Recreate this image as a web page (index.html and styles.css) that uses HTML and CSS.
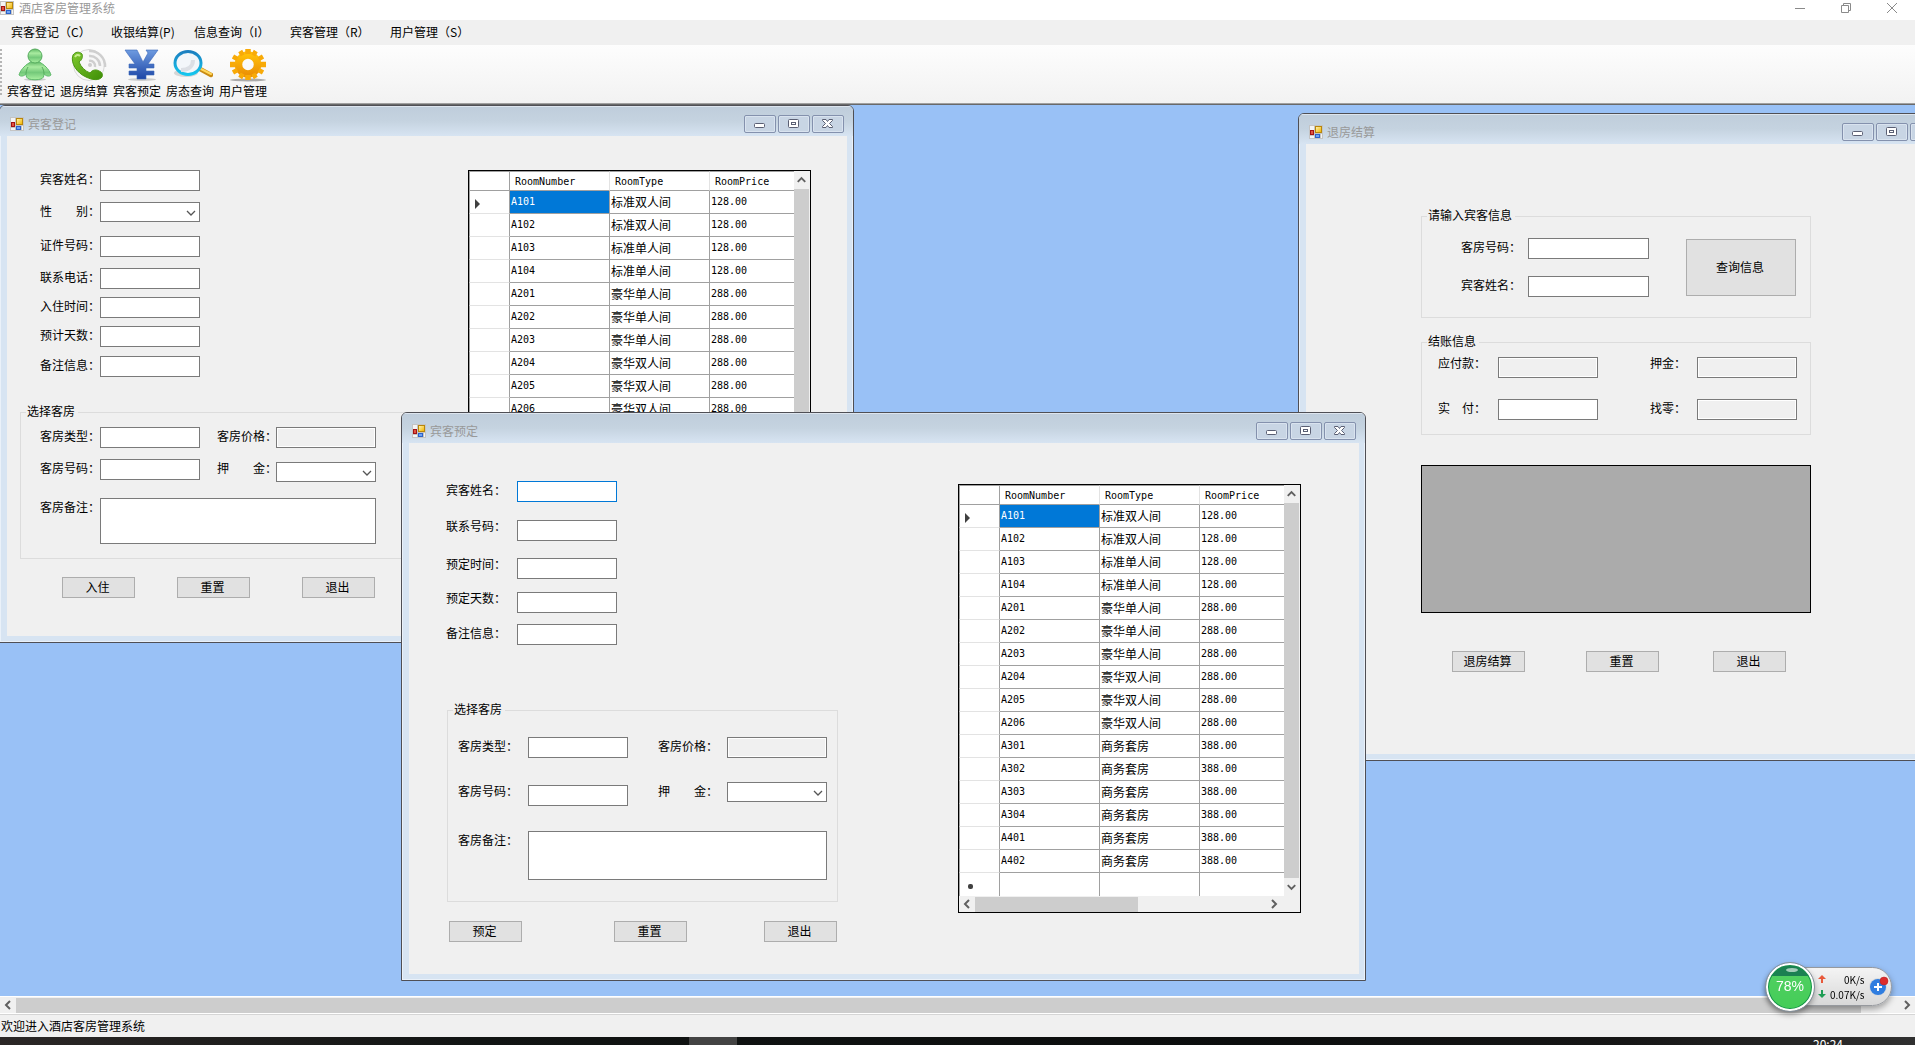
FILE: index.html
```html
<!DOCTYPE html>
<html lang="zh-CN">
<head>
<meta charset="utf-8">
<title>酒店客房管理系统</title>
<link rel="stylesheet" href="styles.css">
</head>
<body>
<svg class="defs" width="0" height="0" aria-hidden="true">
  <defs>
    <linearGradient id="gold" x1="0" y1="0" x2="1" y2="1"><stop offset="0" stop-color="#fff0a8"/><stop offset="1" stop-color="#f2b705"/></linearGradient>
    <linearGradient id="green" x1="0" y1="0" x2="0" y2="1"><stop offset="0" stop-color="#5fb865"/><stop offset=".3" stop-color="#a9eba0"/><stop offset=".6" stop-color="#74c97a"/><stop offset="1" stop-color="#a9f0a0"/></linearGradient>
    <linearGradient id="phone" x1="0" y1="0" x2="1" y2="1"><stop offset="0" stop-color="#7fc92f"/><stop offset="1" stop-color="#3f8f06"/></linearGradient>
    <linearGradient id="yen" x1="0" y1="0" x2="0" y2="1"><stop offset="0" stop-color="#6e9be0"/><stop offset="1" stop-color="#1d46a6"/></linearGradient>
    <linearGradient id="ring" x1="0" y1="0" x2="0" y2="1"><stop offset="0" stop-color="#1c7fc0"/><stop offset="1" stop-color="#14c6ee"/></linearGradient>
    <linearGradient id="gear" x1="0" y1="0" x2="0" y2="1"><stop offset="0" stop-color="#ffbf08"/><stop offset="1" stop-color="#ec9206"/></linearGradient>
    <symbol id="app-icon" viewBox="0 0 14 14">
      <path d="M0 0h14v14H0z" fill="#c4c4c4"/><path d="M1 1h4v4H1zM1 11h4v2H1zM12 9h1v4h-1z" fill="#f4f4f4"/>
      <path d="M1 5h4v5H1z" fill="#a31212"/><path d="M2 6h2v3H2z" fill="#e0533f"/>
      <path d="M6 1h7v7H6z" fill="#b8860b"/><path d="M7 2h5v5H7z" fill="url(#gold)"/>
      <path d="M6 9h5v4H6z" fill="#2c62c9"/><path d="M7 10h3v2H7z" fill="#6fa3f5"/>
    </symbol>
    <symbol id="cap-min" viewBox="0 0 32 18"><rect x="10.500" y="8.500" width="10" height="4" rx="1" fill="#fff" stroke="#5a5f73"/></symbol>
    <symbol id="cap-max" viewBox="0 0 32 18"><rect x="10.500" y="4.500" width="10" height="8" rx="1" fill="#fff" stroke="#5a5f73"/><rect x="13.500" y="7.500" width="4" height="2" fill="#fff" stroke="#5a5f73"/></symbol>
    <symbol id="cap-close" viewBox="0 0 32 18"><path d="M10.500 4.500h3.500l1.500 2 1.500-2h3.500v1l-3 3 3 3v1h-3.500l-1.500-2-1.500 2h-3.500v-1l3-3-3-3z" fill="#fff" stroke="#5a5f73"/></symbol>
    <symbol id="arrow-up" viewBox="0 0 16 16"><path d="M4 10l4-4 4 4" fill="none" stroke="#606060" stroke-width="2"/></symbol>
    <symbol id="arrow-down" viewBox="0 0 16 16"><path d="M4 6l4 4 4-4" fill="none" stroke="#606060" stroke-width="2"/></symbol>
    <symbol id="arrow-left" viewBox="0 0 16 16"><path d="M10 4l-4 4 4 4" fill="none" stroke="#606060" stroke-width="2"/></symbol>
    <symbol id="arrow-right" viewBox="0 0 16 16"><path d="M6 4l4 4-4 4" fill="none" stroke="#606060" stroke-width="2"/></symbol>
    <symbol id="chevron" viewBox="0 0 10 6"><path d="M1 1l4 4 4-4" fill="none" stroke="#555" stroke-width="1.300"/></symbol>
  </defs>
</svg>

<header class="titlebar">
  <svg class="app-icon"><use href="#app-icon"/></svg>
  <h1>酒店客房管理系统</h1>
  <div class="sys-buttons">
    <button type="button" aria-label="最小化"><svg viewBox="0 0 12 12"><path d="M1 6.500h10"/></svg></button>
    <button type="button" aria-label="还原"><svg viewBox="0 0 12 12"><path d="M1.500 3.500h7v7h-7zM3.500 3.500v-2h7v7h-2"/></svg></button>
    <button type="button" aria-label="关闭"><svg viewBox="0 0 12 12"><path d="M1 1l10 10M11 1L1 11"/></svg></button>
  </div>
</header>

<nav class="menubar">
  <a href="#checkin">宾客登记（C）</a>
  <a href="#checkout">收银结算(P)</a>
  <a href="#query">信息查询（I）</a>
  <a href="#guests">宾客管理（R）</a>
  <a href="#users">用户管理（S）</a>
</nav>

<div class="toolbar">
  <button type="button">
    <svg viewBox="0 0 40 34"><ellipse cx="21" cy="31.500" rx="11" ry="1.500" fill="#ccc"/><path d="M15 15c3-2 10-2 12 0 5 3 9 8 10 12-2 2-5 1-7-1 0 3-1 4-3 5-3 1-9 1-12 0-2-1-3-2-3-5-2 2-5 3-7 1 1-4 5-9 10-12z" fill="url(#green)" stroke="#5cb868"/><circle cx="21" cy="8" r="7" fill="url(#green)" stroke="#55ab5d"/><path d="M12 26c0-3 1-5 2-7M30 26c0-3-1-5-2-7" fill="none" stroke="#55ab5d"/></svg>
    宾客登记</button>
  <button type="button">
    <svg viewBox="0 0 40 34"><circle cx="22" cy="17" r="15.500" fill="#f7f7f7" stroke="#d9d9d9"/><path d="M22 8a10 10 0 0 1 11 10M22 3a15 15 0 0 1 16 16M22 13a5 5 0 0 1 6 6" fill="none" stroke="#cfcfcf" stroke-width="2.500"/><circle cx="23" cy="17" r="2" fill="#ccc"/><path d="M6 7c2-3 6-4 9-1 1 3 0 6-3 8 2 5 6 9 11 11 2-3 6-4 9-2 3 1 4 3 3 6-3 4-10 3-16 0C10 25 3 15 6 7z" fill="url(#phone)" stroke="#4b9613"/><path d="M8 9c1-2 3-3 5-1" fill="none" stroke="#c8ee90" stroke-width="2"/></svg>
    退房结算</button>
  <button type="button">
    <svg viewBox="0 0 40 34"><ellipse cx="22" cy="31.500" rx="14" ry="1.500" fill="#ccc"/><path d="M5 2h12l6 12 5-9-2-3h12l-10 14h6v4h-8v3h8v4h-8v4H17v-4H9v-4h8v-3H9v-4h6L7 5z" fill="url(#yen)" stroke="#3a68bb" stroke-width=".6"/></svg>
    宾客预定</button>
  <button type="button">
    <svg viewBox="0 0 40 34"><ellipse cx="13" cy="25" rx="12" ry="4" fill="#d6d6d6"/><path d="M27 21l11 6" stroke="#c98a12" stroke-width="4.500" stroke-linecap="round"/><path d="M28 21l10 5" stroke="#ffd65a" stroke-width="2" stroke-linecap="round"/><ellipse cx="15" cy="15" rx="13" ry="11.500" fill="#f3f6fa" stroke="url(#ring)" stroke-width="3"/><path d="M20 12c0 6-4 10-12 10" fill="none" stroke="#dcdfe5" stroke-width="4"/></svg>
    房态查询</button>
  <button type="button">
    <svg viewBox="0 0 40 34"><ellipse cx="22" cy="32" rx="18" ry="1.500" fill="#aaa"/><circle cx="22" cy="16.500" r="9.500" fill="none" stroke="url(#gear)" stroke-width="7.500"/><g stroke="#f8aa08" stroke-width="5.500"><path d="M22 1v5M22 27v5M4 16.500h5M35 16.500h5"/><path d="M14.200 3l2.500 4.300M27.300 25.700l2.500 4.300M29.800 3l-2.500 4.300M16.700 25.700L14.200 30M7 8.500l4.300 2.500M32.700 22l4.300 2.500M37 8.500L32.700 11M11.300 22L7 24.500" stroke-width="4.500"/></g></svg>
    用户管理</button>
</div>

<main class="desktop">

  <section class="window win-checkin" id="checkin">
    <header class="caption">
      <svg class="app-icon"><use href="#app-icon"/></svg><h2>宾客登记</h2>
      <button type="button" aria-label="最小化"><svg><use href="#cap-min"/></svg></button>
      <button type="button" aria-label="最大化"><svg><use href="#cap-max"/></svg></button>
      <button type="button" aria-label="关闭"><svg><use href="#cap-close"/></svg></button>
    </header>
    <div class="client">
      <form>
        <div class="fields">
          <label for="c-name">宾客姓名：</label><input id="c-name" type="text">
          <label for="c-sex">性　　别：</label><span class="combo"><select id="c-sex"><option></option><option>男</option><option>女</option></select><svg><use href="#chevron"/></svg></span>
          <label for="c-id">证件号码：</label><input id="c-id" type="text">
          <label for="c-tel">联系电话：</label><input id="c-tel" type="text">
          <label for="c-date">入住时间：</label><input id="c-date" type="text">
          <label for="c-days">预计天数：</label><input id="c-days" type="text">
          <label for="c-note">备注信息：</label><input id="c-note" type="text">
        </div>
        <fieldset>
          <legend>选择客房</legend>
          <div class="group">
            <label for="c-type">客房类型：</label><input id="c-type" type="text">
            <label for="c-price">客房价格：</label><input id="c-price" type="text" readonly>
            <label for="c-room">客房号码：</label><input id="c-room" type="text">
            <label for="c-deposit">押　　金：</label><span class="combo lower"><select id="c-deposit"><option></option></select><svg><use href="#chevron"/></svg></span>
            <label for="c-remark">客房备注：</label><textarea id="c-remark"></textarea>
          </div>
        </fieldset>
        <div class="actions"><button type="button">入住</button><button type="button">重置</button><button type="button">退出</button></div>
      </form>
      <div class="datagrid">
        <table>
          <thead><tr><th></th><th scope="col">RoomNumber</th><th scope="col">RoomType</th><th scope="col">RoomPrice</th></tr></thead>
          <tbody>
            <tr><th scope="row"><i class="current"></i></th><td class="selected">A101</td><td class="zh">标准双人间</td><td>128.00</td></tr>
            <tr><th></th><td>A102</td><td class="zh">标准双人间</td><td>128.00</td></tr>
            <tr><th></th><td>A103</td><td class="zh">标准单人间</td><td>128.00</td></tr>
            <tr><th></th><td>A104</td><td class="zh">标准单人间</td><td>128.00</td></tr>
            <tr><th></th><td>A201</td><td class="zh">豪华单人间</td><td>288.00</td></tr>
            <tr><th></th><td>A202</td><td class="zh">豪华单人间</td><td>288.00</td></tr>
            <tr><th></th><td>A203</td><td class="zh">豪华单人间</td><td>288.00</td></tr>
            <tr><th></th><td>A204</td><td class="zh">豪华双人间</td><td>288.00</td></tr>
            <tr><th></th><td>A205</td><td class="zh">豪华双人间</td><td>288.00</td></tr>
            <tr><th></th><td>A206</td><td class="zh">豪华双人间</td><td>288.00</td></tr>
          </tbody>
        </table>
        <div class="vscroll"><svg><use href="#arrow-up"/></svg><div class="thumb"></div><svg><use href="#arrow-down"/></svg></div>
      </div>
    </div>
  </section>

  <section class="window win-checkout" id="checkout">
    <header class="caption">
      <svg class="app-icon"><use href="#app-icon"/></svg><h2>退房结算</h2>
      <button type="button" aria-label="最小化"><svg><use href="#cap-min"/></svg></button>
      <button type="button" aria-label="最大化"><svg><use href="#cap-max"/></svg></button>
      <button type="button" aria-label="关闭"><svg><use href="#cap-close"/></svg></button>
    </header>
    <div class="client">
      <form>
        <fieldset>
          <legend>请输入宾客信息</legend>
          <div class="group lookup">
            <label for="o-room">客房号码：</label><input id="o-room" type="text">
            <button type="button">查询信息</button>
            <label for="o-name">宾客姓名：</label><input id="o-name" type="text">
          </div>
        </fieldset>
        <fieldset>
          <legend>结账信息</legend>
          <div class="group bill">
            <label class="raised" for="o-due">应付款：</label><input id="o-due" type="text" readonly>
            <label class="raised" for="o-deposit">押金：</label><input id="o-deposit" type="text" readonly>
            <label for="o-paid">实　付：</label><input id="o-paid" type="text">
            <label for="o-change">找零：</label><input id="o-change" type="text" readonly>
          </div>
        </fieldset>
        <div class="empty-grid"></div>
        <div class="actions"><button type="button">退房结算</button><button type="button">重置</button><button type="button">退出</button></div>
      </form>
    </div>
  </section>

  <section class="window win-booking" id="booking">
    <header class="caption">
      <svg class="app-icon"><use href="#app-icon"/></svg><h2>宾客预定</h2>
      <button type="button" aria-label="最小化"><svg><use href="#cap-min"/></svg></button>
      <button type="button" aria-label="最大化"><svg><use href="#cap-max"/></svg></button>
      <button type="button" aria-label="关闭"><svg><use href="#cap-close"/></svg></button>
    </header>
    <div class="client">
      <form>
        <div class="fields">
          <label for="b-name">宾客姓名：</label><input id="b-name" class="active" type="text">
          <label class="raised" for="b-tel">联系号码：</label><input id="b-tel" type="text">
          <label class="raised" for="b-date">预定时间：</label><input id="b-date" type="text">
          <label class="raised" for="b-days">预定天数：</label><input id="b-days" type="text">
          <label for="b-note">备注信息：</label><input id="b-note" type="text">
        </div>
        <fieldset>
          <legend>选择客房</legend>
          <div class="group">
            <label for="b-type">客房类型：</label><input id="b-type" type="text">
            <label for="b-price">客房价格：</label><input id="b-price" type="text" readonly>
            <label for="b-room">客房号码：</label><input id="b-room" class="lower" type="text">
            <label for="b-deposit">押　　金：</label><span class="combo"><select id="b-deposit"><option></option></select><svg><use href="#chevron"/></svg></span>
            <label for="b-remark">客房备注：</label><textarea id="b-remark"></textarea>
          </div>
        </fieldset>
        <div class="actions"><button type="button">预定</button><button type="button">重置</button><button type="button">退出</button></div>
      </form>
      <div class="datagrid">
        <table>
          <thead><tr><th></th><th scope="col">RoomNumber</th><th scope="col">RoomType</th><th scope="col">RoomPrice</th></tr></thead>
          <tbody>
            <tr><th scope="row"><i class="current"></i></th><td class="selected">A101</td><td class="zh">标准双人间</td><td>128.00</td></tr>
            <tr><th></th><td>A102</td><td class="zh">标准双人间</td><td>128.00</td></tr>
            <tr><th></th><td>A103</td><td class="zh">标准单人间</td><td>128.00</td></tr>
            <tr><th></th><td>A104</td><td class="zh">标准单人间</td><td>128.00</td></tr>
            <tr><th></th><td>A201</td><td class="zh">豪华单人间</td><td>288.00</td></tr>
            <tr><th></th><td>A202</td><td class="zh">豪华单人间</td><td>288.00</td></tr>
            <tr><th></th><td>A203</td><td class="zh">豪华单人间</td><td>288.00</td></tr>
            <tr><th></th><td>A204</td><td class="zh">豪华双人间</td><td>288.00</td></tr>
            <tr><th></th><td>A205</td><td class="zh">豪华双人间</td><td>288.00</td></tr>
            <tr><th></th><td>A206</td><td class="zh">豪华双人间</td><td>288.00</td></tr>
            <tr><th></th><td>A301</td><td class="zh">商务套房</td><td>388.00</td></tr>
            <tr><th></th><td>A302</td><td class="zh">商务套房</td><td>388.00</td></tr>
            <tr><th></th><td>A303</td><td class="zh">商务套房</td><td>388.00</td></tr>
            <tr><th></th><td>A304</td><td class="zh">商务套房</td><td>388.00</td></tr>
            <tr><th></th><td>A401</td><td class="zh">商务套房</td><td>388.00</td></tr>
            <tr><th></th><td>A402</td><td class="zh">商务套房</td><td>388.00</td></tr>
            <tr class="new-row"><th><i class="new"></i></th><td></td><td></td><td></td></tr>
          </tbody>
        </table>
        <div class="vscroll"><svg><use href="#arrow-up"/></svg><div class="thumb"></div><svg><use href="#arrow-down"/></svg></div>
        <div class="hscroll"><svg><use href="#arrow-left"/></svg><div class="track"><div class="thumb"></div></div><svg><use href="#arrow-right"/></svg></div>
      </div>
    </div>
  </section>
</main>

<div class="hscroll desktop-scroll"><svg><use href="#arrow-left"/></svg><div class="track"><div class="thumb"></div></div><svg><use href="#arrow-right"/></svg></div>
<footer class="statusbar">欢迎进入酒店客房管理系统</footer>
<div class="taskbar"><div class="task"></div><time>20:24</time></div>

<aside class="netmon">
  <div class="ball">78%</div>
  <dl>
    <dt><svg viewBox="0 0 8 8"><path d="M4 0l4 4H5v4H3V4H0z" fill="#e8593b"/></svg></dt><dd>0K/s</dd>
    <dt><svg viewBox="0 0 8 8"><path d="M4 8l4-4H5V0H3v4H0z" fill="#1f9d55"/></svg></dt><dd>0.07K/s</dd>
  </dl>
  <svg class="boost" viewBox="0 0 20 20"><circle cx="9" cy="11" r="9" fill="#d8dadd"/><circle cx="9" cy="11" r="8" fill="#2f7de0"/><path d="M9 7v8M5 11h8" stroke="#fff" stroke-width="2"/><circle cx="15" cy="5" r="4" fill="#dc2c2c" stroke="#b81f1f" stroke-width=".5"/></svg>
</aside>
</body>
</html>
```
FILE: styles.css
```css
* { box-sizing: border-box; }

body {
  margin: 0;
  height: 100vh;
  display: flex;
  flex-direction: column;
  overflow: hidden;
  background: #f0f0f0;
  color: #000;
  font: 12px/18px "Noto Sans CJK SC", sans-serif;
}

button, input, select, textarea { font: inherit; color: inherit; margin: 0; padding: 0; border-radius: 0; }
h1, h2 { margin: 0; font-size: 12px; font-weight: 400; color: #999; }
svg { display: block; flex: none; }
.defs { position: absolute; }
.app-icon { width: 14px; height: 14px; }

/* Main window chrome */
.titlebar { flex: none; height: 20px; display: flex; align-items: center; gap: 5px; background: #fff; padding-bottom: 4px; }
.sys-buttons { margin-left: auto; display: flex; }
.sys-buttons button { width: 46px; height: 16px; border: 0; background: none; display: grid; place-items: center; }
.sys-buttons svg { width: 12px; height: 12px; fill: none; stroke: #8a8a8a; }

.menubar { flex: none; height: 25px; display: grid; grid-template-columns: 100px 83px 96px 100px 100px; align-items: center; padding: 0 0 2px 11px; }
.menubar a { color: #000; text-decoration: none; white-space: nowrap; }

.toolbar { flex: none; height: 58px; display: flex; gap: 5px; padding: 3px 7px; position: relative; background: linear-gradient(#fdfdfd, #f2f2f2); }
.toolbar::before { content: ""; position: absolute; left: 0; top: 4px; bottom: 8px; width: 2px; background: repeating-linear-gradient(#b5b5b5 0 2px, transparent 2px 4px); }
.toolbar button { width: 48px; height: 51px; border: 0; background: none; line-height: 18px; white-space: nowrap; text-align: left; }
.toolbar svg { width: 40px; height: 34px; margin-left: 7px; }

.desktop { flex: 1; min-height: 0; position: relative; overflow: hidden; background: #99c1f6; border-top: 1px solid #a0a0a0; box-shadow: inset 0 1px #696969; padding-top: 1px; }

/* Child windows */
.window { position: absolute; border: 1px solid #4f4f55; border-radius: 6px 6px 0 0; background: #d7e4f2; padding: 0 6px 6px 7px; box-shadow: inset 0 0 0 1px #eaf1f9; overflow: hidden; }
.win-checkin { left: -1px; top: 1px; width: 855px; }
.win-booking { left: 401px; top: 308px; width: 965px; }
.win-checkout { left: 1298px; top: 9px; width: 654px; }

.caption { height: 30px; margin: 0 -6px 0 -7px; padding: 5px 9px 0 10px; display: flex; align-items: center; gap: 2px; background: linear-gradient(#bfcddb, #c5d3e0 50%, #d7e4f2); box-shadow: inset 0 1px #dde5ee; }
.caption h2 { flex: 1; padding-left: 2px; }
.caption button { width: 32px; height: 18px; border: 1px solid #8491ad; border-radius: 2px; background: #c8d5e4; box-shadow: inset 0 0 0 1px #d9e3ef; }
.caption button svg { width: 32px; height: 18px; margin: -1px; }

.client { background: #f0f0f0; display: flex; justify-content: space-between; align-items: flex-start; }
.win-checkin .client { padding: 34px 36px 37px 13px; }
.win-booking .client { padding: 38px 58px 32px 38px; }
.win-checkout .client { padding: 64px 0 82px 115px; }
.win-checkin form { width: 410px; }
.win-booking form { width: 391px; }
.win-checkout form { width: 390px; }

/* Form controls */
label { line-height: 18px; margin-left: -1px; white-space: nowrap; }
label.raised { line-height: 12px; }
input, select, textarea { display: block; width: 100px; height: 21px; border: 1px solid #7a7a7a; background: #fff; outline: 0; resize: none; }
input[readonly] { background: #f0f0f0; box-shadow: inset 0 0 0 1px #fff; }
input.active { border-color: #0078d7; }
select { height: 20px; appearance: none; }
.combo { position: relative; width: 100px; }
.combo svg { position: absolute; right: 4px; top: 8px; width: 10px; height: 6px; pointer-events: none; }
.lower { margin-top: 3px; }

.fields, .group, .actions { display: grid; align-items: start; justify-content: start; }
.win-checkin .fields { grid-template-columns: 59px 100px; grid-template-rows: 32px 34px 32px 29px 29px 30px 21px; padding-left: 21px; margin-bottom: 27px; }
.win-booking .fields { grid-template-columns: 70px 100px; grid-template-rows: 39px 38px 34px 32px 21px; margin-bottom: 57px; }

fieldset { margin: 0; padding: 0; min-width: 0; border: 1px solid #dcdcdc; }
legend { margin-left: 5px; padding: 0 3px 2px 1px; line-height: 14px; }
.group textarea { grid-column: 2 / -1; width: 100%; }
.win-checkin .group { grid-template-columns: 59px 118px 58px 100px; grid-template-rows: 32px 39px 46px; padding: 7px 0 14px 20px; }
.win-checkin textarea { height: 46px; }
.win-booking .group { grid-template-columns: 69px 131px 68px 100px; grid-template-rows: 45px 49px 49px; padding: 19px 0 21px 11px; }
.win-booking textarea { height: 49px; }
.group.lookup { grid-template-columns: 66px 158px 110px; grid-template-rows: 38px 21px; padding: 14px 0 20px 40px; }
.lookup input { width: 121px; }
.lookup button { grid-area: 1 / 3 / 3; height: 57px; align-self: center; }
.group.bill { grid-template-columns: 59px 153px 46px 100px; grid-template-rows: 42px 21px; padding: 7px 0 14px 17px; }
fieldset + fieldset { margin-top: 16px; }
.empty-grid { margin-top: 30px; height: 148px; border: 1px solid #000; background: #ababab; }

form button { border: 1px solid #adadad; background: #e1e1e1; padding: 0 2px 2px 0; }
.actions { margin-top: 18px; }
.actions button { width: 73px; height: 21px; line-height: 17px; }
.win-checkin .actions { grid-template-columns: 115px 125px 73px; padding-left: 42px; }
.win-booking .actions { grid-template-columns: 165px 150px 73px; padding-left: 2px; margin-top: 19px; }
.win-checkout .actions { grid-template-columns: 134px 127px 73px; padding-left: 31px; margin-top: 38px; }

/* Room list */
.datagrid { width: 343px; border: 1px solid #000; display: grid; grid-template-columns: 325px 16px; background: #f0f0f0; }
.win-checkin .datagrid { height: 429px; }
.win-booking .datagrid { margin-top: 3px; }
table { align-self: start; width: 325px; table-layout: fixed; border-collapse: separate; border-spacing: 0; background: #fff; font: 10px/16px "DejaVu Sans Mono", "Noto Sans CJK SC", monospace; }
th, td { height: 23px; padding: 0 0 0 1px; text-align: left; font-weight: 400; border: solid #a0a0a0; border-width: 0 1px 1px 0; white-space: nowrap; }
th:first-child { width: 41px; border-left: 1px solid #a0a0a0; }
th:nth-child(2), th:nth-child(3) { width: 100px; }
th:last-child, td:last-child { border-right: 0; }
thead th { height: 20px; padding: 2px 0 0 5px; border-top: 1px solid #a0a0a0; border-right-color: #e3e3e3; }
thead th:first-child { border-right-color: #a0a0a0; }
tbody th { border-bottom-color: #e3e3e3; }
td.zh { font: 12px/18px "Noto Sans CJK SC", sans-serif; }
td.selected { background: #0078d7; color: #fff; }
.new-row th, .new-row td { border-bottom: 0; }
i.current, i.new { display: block; }
i.current { margin: 3px 0 0 4px; width: 0; border: solid transparent; border-width: 5px 0 5px 5px; border-left-color: #404040; }
i.new { margin: 4px 0 0 7px; width: 5px; height: 5px; border-radius: 2px; background: #404040; }

.vscroll { display: flex; flex-direction: column; align-items: flex-start; }
.thumb { background: #cdcdcd; }
.vscroll .thumb { flex: 1; width: 15px; }
.vscroll svg { width: 15px; height: 18px; }
.hscroll { display: flex; align-items: center; background: #f0f0f0; }
.hscroll svg { width: 16px; height: 16px; }
.hscroll .track { flex: 1; }
.hscroll .thumb { height: 15px; width: 56%; }
.datagrid .hscroll { height: 16px; padding-right: 2px; }

.desktop-scroll { flex: none; height: 17px; border-top: 1px solid #fff; }
.desktop-scroll .thumb { width: 98%; }
.statusbar { flex: none; height: 24px; padding: 3px 1px 0; border-top: 1px solid #fff; box-shadow: inset 0 1px #d5d5d5; }
.taskbar { flex: none; height: 8px; display: flex; justify-content: space-between; overflow: hidden; background: linear-gradient(90deg, #2b2726, #111413 25%, #0b0d0d 65%, #161616 85%, #303030); color: #fff; padding: 0 72px 0 36%; }
.taskbar .task { width: 48px; background: #434343; }
.taskbar time { line-height: 14px; }

/* Network speed ball floating over the desktop */
.netmon { position: fixed; right: 23px; bottom: 39px; height: 39px; width: 126px; display: flex; align-items: center; border-radius: 20px; background: linear-gradient(#f4f4f4, #d8d8d8); border: 1px solid #96999e; box-shadow: 0 3px 6px rgba(0, 0, 0, .35); }
.ball { position: relative; flex: none; width: 48px; height: 48px; margin-left: -1px; border-radius: 50%; border: 2px solid #fff; outline: 1px solid #85909a; background: linear-gradient(#1b8052 11px, #4fcf60 11px, #44cd58); box-shadow: inset 0 0 0 1px #15904c, 0 3px 6px rgba(0, 0, 0, .4); color: #fff; font: 14px/42px "Liberation Sans", sans-serif; text-align: center; }
.ball::before { content: ""; position: absolute; left: 18px; top: 3px; width: 12px; height: 4px; border-radius: 50%; background: rgba(255, 255, 255, .6); }
.netmon dl { margin: 0; flex: 1; display: grid; grid-template-columns: 12px 1fr; align-items: center; padding-left: 4px; line-height: 15px; font-size: 10px; }
.netmon dt svg { width: 8px; height: 8px; }
.netmon dd { margin: 0; text-align: right; white-space: nowrap; }
.boost { width: 20px; height: 20px; margin: 0 6px 2px 4px; }
```
